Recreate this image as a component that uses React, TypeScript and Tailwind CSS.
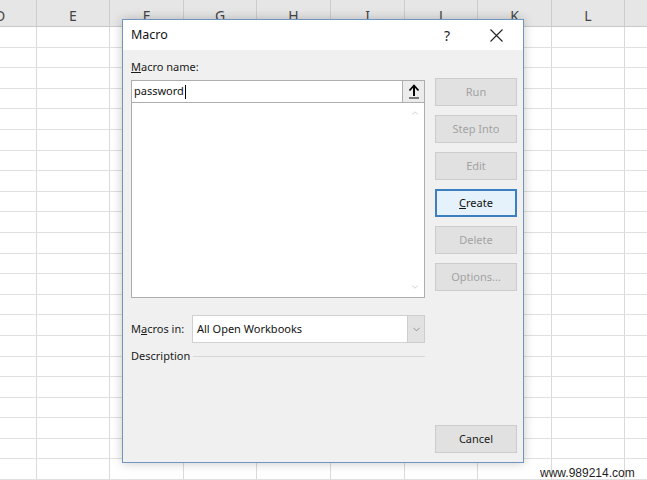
import { ChevronDown, ChevronUp } from 'lucide-react';

const columns = [
  { letter: 'D', width: 'w-[73px] -ml-[36px]' },
  { letter: 'E', width: 'w-[73px]' },
  { letter: 'F', width: 'w-[74px]' },
  { letter: 'G', width: 'w-[73px]' },
  { letter: 'H', width: 'w-[74px]' },
  { letter: 'I', width: 'w-[74px]' },
  { letter: 'J', width: 'w-[73px]' },
  { letter: 'K', width: 'w-[74px]' },
  { letter: 'L', width: 'w-[73px]' },
  { letter: '', width: 'w-[73px]' },
];

const rows = Array.from({ length: 22 }, (_, i) => i);

function SheetButton({ label, disabled = true }: { label: React.ReactNode; disabled?: boolean }) {
  return (
    <div
      className={
        'h-[28px] flex items-center justify-center bg-[#e1e1e1] border border-[#cccccc] text-[11px] ' +
        (disabled ? 'text-[#a3a3a3]' : 'text-[#1a1a1a]')
      }
    >
      {label}
    </div>
  );
}

export default function App() {
  return (
    <div
      className="relative w-[647px] h-[480px] overflow-hidden bg-white"
      style={{ fontFamily: '"Noto Sans", "Liberation Sans", sans-serif' }}
    >
      {/* Spreadsheet behind */}
      <div className="flex flex-col">
        <div className="flex h-[27px] bg-[#e6e6e6] border-b border-[#c9c9c9]">
          {columns.map((c, i) => (
            <div
              key={i}
              className={`${c.width} shrink-0 border-r border-[#cdcdcd] flex items-center justify-center text-[14px] text-[#444] pt-[4px]`}
            >
              {c.letter}
            </div>
          ))}
        </div>
        {rows.map((r) => (
          <div key={r} className="flex h-[20.6px] border-b border-[#e0e0e0]">
            {columns.map((c, i) => (
              <div key={i} className={`${c.width} shrink-0 border-r border-[#dadada]`} />
            ))}
          </div>
        ))}
      </div>

      {/* Macro dialog */}
      <div className="absolute left-[122px] top-[19px] w-[402px] h-[444px] border border-[#6f95c2] bg-[#f0f0f0] shadow-[0_0_10px_rgba(0,0,0,0.22)] flex flex-col">
        <div className="h-[30px] bg-white flex items-center pl-[8px] pr-[18px] shrink-0">
          <span className="text-[12.5px] text-[#111]">Macro</span>
          <span className="ml-auto text-[14px] text-[#222] mr-[40px]">?</span>
          <svg width="13" height="13" viewBox="0 0 13 13" className="mr-[2px]">
            <path d="M0.5 0.5 L12.5 12.5 M12.5 0.5 L0.5 12.5" stroke="#222" strokeWidth="1.1" fill="none" />
          </svg>
        </div>

        <div className="flex flex-1 pl-[8px] pr-[5px] pb-[9px]">
          {/* left column */}
          <div className="w-[294px] flex flex-col">
            <div className="mt-[9px] h-[16px] text-[11px] leading-[16px] text-[#1a1a1a]">
              <span className="underline">M</span>acro name:
            </div>
            <div className="mt-[5px] h-[23px] flex bg-white border border-[#adadad]">
              <div className="flex-1 flex items-center pl-[2px] text-[11px] text-[#111]">
                password
                <span className="inline-block w-[1px] h-[14px] bg-black ml-[1px]" />
              </div>
              <div className="w-[22px] h-full bg-[#ececec] border-l border-[#adadad] flex items-center justify-center">
                <svg width="12" height="15" viewBox="0 0 12 15">
                  <path d="M6 2 L6 12" stroke="#000" strokeWidth="2" />
                  <path d="M1.5 6.5 L6 1.5 L10.5 6.5" stroke="#000" strokeWidth="1.8" fill="none" />
                  <path d="M1 14 L11 14" stroke="#000" strokeWidth="1" />
                </svg>
              </div>
            </div>
            <div className="h-[195px] flex bg-white border border-t-0 border-[#adadad]">
              <div className="flex-1" />
              <div className="w-[18px] flex flex-col items-center justify-between py-[5px]">
                <ChevronUp size={10} color="#c9c9c9" strokeWidth={2} />
                <ChevronDown size={10} color="#c9c9c9" strokeWidth={2} />
              </div>
            </div>

            <div className="mt-[17px] flex items-center h-[28px]">
              <div className="w-[61px] text-[11px] text-[#1a1a1a]">
                M<span className="underline">a</span>cros in:
              </div>
              <div className="flex-1 h-full flex bg-white border border-[#d0d0d0]">
                <div className="flex-1 flex items-center pl-[4px] text-[11px] text-[#111]">All Open Workbooks</div>
                <div className="w-[18px] my-[-1px] mr-[-1px] bg-[#e2e2e2] border border-[#cdcdcd] flex items-center justify-center">
                  <ChevronDown size={11} color="#8a8a8a" strokeWidth={2} />
                </div>
              </div>
            </div>

            <div className="mt-[5px] flex items-center h-[16px]">
              <span className="text-[11px] text-[#1a1a1a]">Description</span>
              <div className="flex-1 ml-[3px] h-[1px] bg-[#d6d6d6]" />
            </div>
          </div>

          {/* right column of buttons */}
          <div className="w-[82px] ml-[10px] flex flex-col">
            <div className="mt-[28px] flex flex-col gap-[9px]">
              <SheetButton label="Run" />
              <SheetButton label="Step Into" />
              <SheetButton label="Edit" />
              <div className="h-[28px] flex items-center justify-center bg-[#e5f1fb] border-[2px] border-[#3c7fc0] text-[11px] text-[#111]">
                <span>
                  <span className="underline">C</span>reate
                </span>
              </div>
              <SheetButton label="Delete" />
              <SheetButton label="Options..." />
            </div>
            <div className="mt-auto">
              <div className="h-[28px] flex items-center justify-center bg-[#e1e1e1] border border-[#cccccc] text-[11px] text-[#1a1a1a]">
                Cancel
              </div>
            </div>
          </div>
        </div>
      </div>

      <div
        className="absolute left-[540px] top-[464px] text-[12px] text-[#1e1e1e]"
        style={{ fontFamily: '"Liberation Sans", Arial, sans-serif' }}
      >
        www.989214.com
      </div>
    </div>
  );
}
